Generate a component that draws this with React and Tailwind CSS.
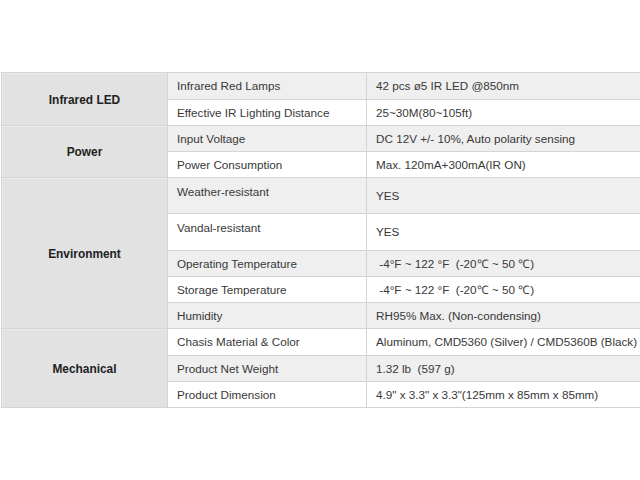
const groups = [
  { name: 'Infrared LED', cls: 'row-start-1 row-span-2' },
  { name: 'Power', cls: 'row-start-3 row-span-2' },
  { name: 'Environment', cls: 'row-start-5 row-span-5' },
  { name: 'Mechanical', cls: 'row-start-10 row-span-3' },
];

const rows = [
  { label: 'Infrared Red Lamps', value: '42 pcs ø5 IR LED @850nm' },
  { label: 'Effective IR Lighting Distance', value: '25~30M(80~105ft)' },
  { label: 'Input Voltage', value: 'DC 12V +/- 10%, Auto polarity sensing' },
  { label: 'Power Consumption', value: 'Max. 120mA+300mA(IR ON)' },
  { label: 'Weather-resistant', value: 'YES', top: true },
  { label: 'Vandal-resistant', value: 'YES', top: true },
  { label: 'Operating Temperature', value: ' -4°F ~ 122 °F  (-20℃ ~ 50 ℃)' },
  { label: 'Storage Temperature', value: ' -4°F ~ 122 °F  (-20℃ ~ 50 ℃)' },
  { label: 'Humidity', value: 'RH95% Max. (Non-condensing)' },
  { label: 'Chasis Material & Color', value: 'Aluminum, CMD5360 (Silver) / CMD5360B (Black)' },
  { label: 'Product Net Weight', value: '1.32 lb  (597 g)' },
  { label: 'Product Dimension', value: '4.9" x 3.3" x 3.3"(125mm x 85mm x 85mm)' },
];

const App = () => {
  return (
    <div
      className="w-[640px] h-[480px] overflow-hidden bg-white text-[#383838] text-[11.7px]"
      style={{ fontFamily: '"Liberation Sans", Arial, sans-serif' }}
    >
      <div className="pt-[72px] pl-[1px]">
        <div className="grid w-[700px] grid-cols-[166px_199px_1fr] grid-rows-[27px_26px_26px_26px_36px_37px_26px_26px_26px_27px_26px_26px] border-t border-l border-[#d4d4d4]">
          {groups.map((g) => (
            <div
              key={g.name}
              className={`${g.cls} col-start-1 flex items-center justify-center pt-[3px] border-b border-r border-[#d4d4d4] bg-[#e2e2e2] shadow-[inset_1px_1px_0_#ececec] font-bold text-[#222] text-[11.9px]`}
            >
              {g.name}
            </div>
          ))}
          {rows.map((r, i) => (
            <div key={i} className="contents">
              <div
                className={`col-start-2 border-b border-r border-[#d4d4d4] pl-[9px] flex ${r.top ? 'items-start pt-[5px]' : 'items-center'} ${i % 2 === 0 ? 'bg-[#efefef]' : 'bg-white'}`}
              >
                {r.label}
              </div>
              <div
                className={`col-start-3 border-b border-[#d4d4d4] pl-[9px] flex items-center whitespace-pre ${i % 2 === 0 ? 'bg-[#efefef]' : 'bg-white'}`}
              >
                {r.value}
              </div>
            </div>
          ))}
        </div>
      </div>
    </div>
  );
};

export default App;
